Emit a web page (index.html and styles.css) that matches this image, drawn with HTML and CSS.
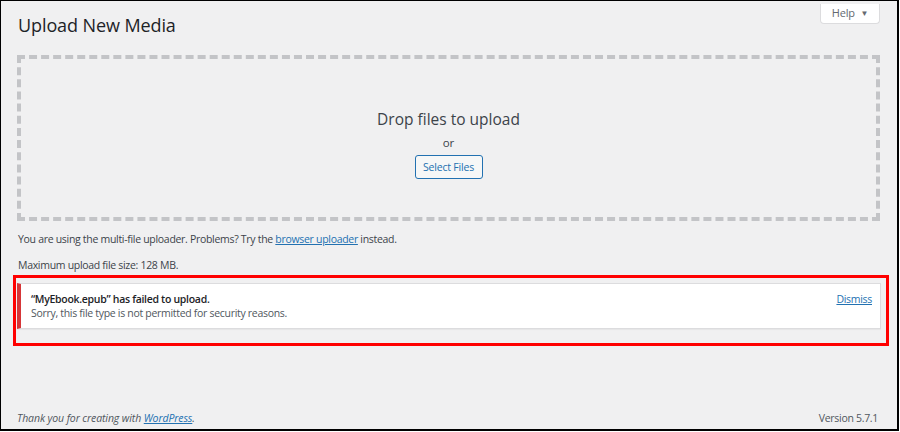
FILE: index.html
```html
<!DOCTYPE html>
<html lang="en">
<head>
<meta charset="utf-8">
<title>Upload New Media</title>
<link rel="stylesheet" href="styles.css">
</head>
<body>
<div class="frame">
  <div class="help-tab">
    <button class="help-btn">Help <span class="caret">&#9660;</span></button>
  </div>
  <main class="wrap">
    <h1 class="title">Upload New Media</h1>
    <div class="drop-area">
      <p class="drop-info">Drop files to upload</p>
      <p class="drop-or">or</p>
      <button class="select-btn">Select Files</button>
    </div>
    <p class="upload-note">You are using the multi-file uploader. Problems? Try the <a href="#">browser uploader</a> instead.</p>
    <p class="max-size">Maximum upload file size: 128 MB.</p>
    <div class="highlight">
      <div class="notice">
        <div class="notice-text">
          <strong class="notice-title">“MyEbook.epub” has failed to upload.</strong>
          <span class="notice-msg">Sorry, this file type is not permitted for security reasons.</span>
        </div>
        <a href="#" class="dismiss">Dismiss</a>
      </div>
    </div>
  </main>
  <footer class="footer">
    <p class="thanks">Thank you for creating with <a href="#">WordPress</a>.</p>
    <p class="version">Version 5.7.1</p>
  </footer>
</div>
</body>
</html>
```

FILE: styles.css
```css
* { box-sizing: border-box; }

html, body {
  margin: 0;
  padding: 0;
  background: #fff;
}

body {
  width: 900px;
  height: 432px;
  font-family: "Open Sans", "Noto Sans", sans-serif;
  color: #3c434a;
}

a { color: #2271b1; }

.frame {
  position: relative;
  width: 899px;
  height: 431px;
  background: #f0f0f1;
  border-left: 1px solid #000;
  border-top: 1px solid #000;
  border-right: 2px solid #000;
  border-bottom: 2px solid #000;
  display: flex;
  flex-direction: column;
}

/* Help tab hangs from the top edge */
.help-tab {
  position: absolute;
  top: -1px;
  right: 17px;
}

.help-btn {
  height: 20px;
  width: 60px;
  padding: 0 0 2px;
  background: #fff;
  border: 1px solid #dcdcde;
  border-top: none;
  border-radius: 0 0 4px 4px;
  font: 11px "Open Sans", sans-serif;
  letter-spacing: -0.2px;
  color: #646970;
}

.caret {
  font-size: 8px;
  position: relative;
  top: -1px;
  margin-left: 3px;
}

.wrap {
  padding: 0 17px 0 16px;
  flex: 1;
}

.title {
  margin: 12px 0 0 1px;
  font-size: 18px;
  font-weight: 400;
  line-height: 24px;
  color: #1d2327;
  letter-spacing: -0.1px;
}

.drop-area {
  margin-top: 18px;
  height: 166px;
  border: 4px dashed #c3c4c7;
  display: flex;
  flex-direction: column;
  align-items: center;
  padding-top: 48px;
}

.drop-info {
  margin: 0;
  font-size: 15.5px;
  line-height: 24px;
  color: #3c434a;
}

.drop-or {
  margin: 3px 0 0;
  font-size: 11.5px;
  line-height: 18px;
}

.select-btn {
  margin-top: 3px;
  height: 24px;
  width: 68px;
  padding: 0;
  background: #f6f7f7;
  border: 1px solid #2271b1;
  border-radius: 3px;
  color: #2271b1;
  font: 10.5px "Open Sans", sans-serif;
  letter-spacing: -0.2px;
}

.upload-note,
.max-size {
  margin: 0 0 0 1px;
  font-size: 10.5px;
  letter-spacing: -0.3px;
  line-height: 16px;
}

.upload-note { margin-top: 10px; }
.max-size { margin-top: 10px; }

.highlight {
  margin: 2px -9px 0 -4px;
  border: 3px solid #ff0000;
  padding: 5px 5px 14px 1px;
}

.notice {
  background: #fff;
  border: 1px solid #dcdcde;
  border-left: 4px solid #d63638;
  box-shadow: 0 1px 1px rgba(0,0,0,0.04);
  display: flex;
  justify-content: space-between;
  align-items: flex-start;
  padding: 8px 8px 8px 10px;
}

.notice-text {
  display: flex;
  flex-direction: column;
  font-size: 10.5px;
  letter-spacing: -0.3px;
  line-height: 14px;
}

.notice-title {
  font-weight: 600;
  color: #1d2327;
}

.notice-msg {
  color: #50575e;
}

.dismiss {
  font-size: 10.5px;
  letter-spacing: -0.3px;
  line-height: 14px;
}

.footer {
  display: flex;
  justify-content: space-between;
  align-items: baseline;
  padding: 0 19px 3px 16px;
  font-size: 10.5px;
  letter-spacing: -0.3px;
  line-height: 16px;
  color: #50575e;
}

.footer p { margin: 0; }

.thanks {
  font-style: italic;
  letter-spacing: -0.1px;
}
```
